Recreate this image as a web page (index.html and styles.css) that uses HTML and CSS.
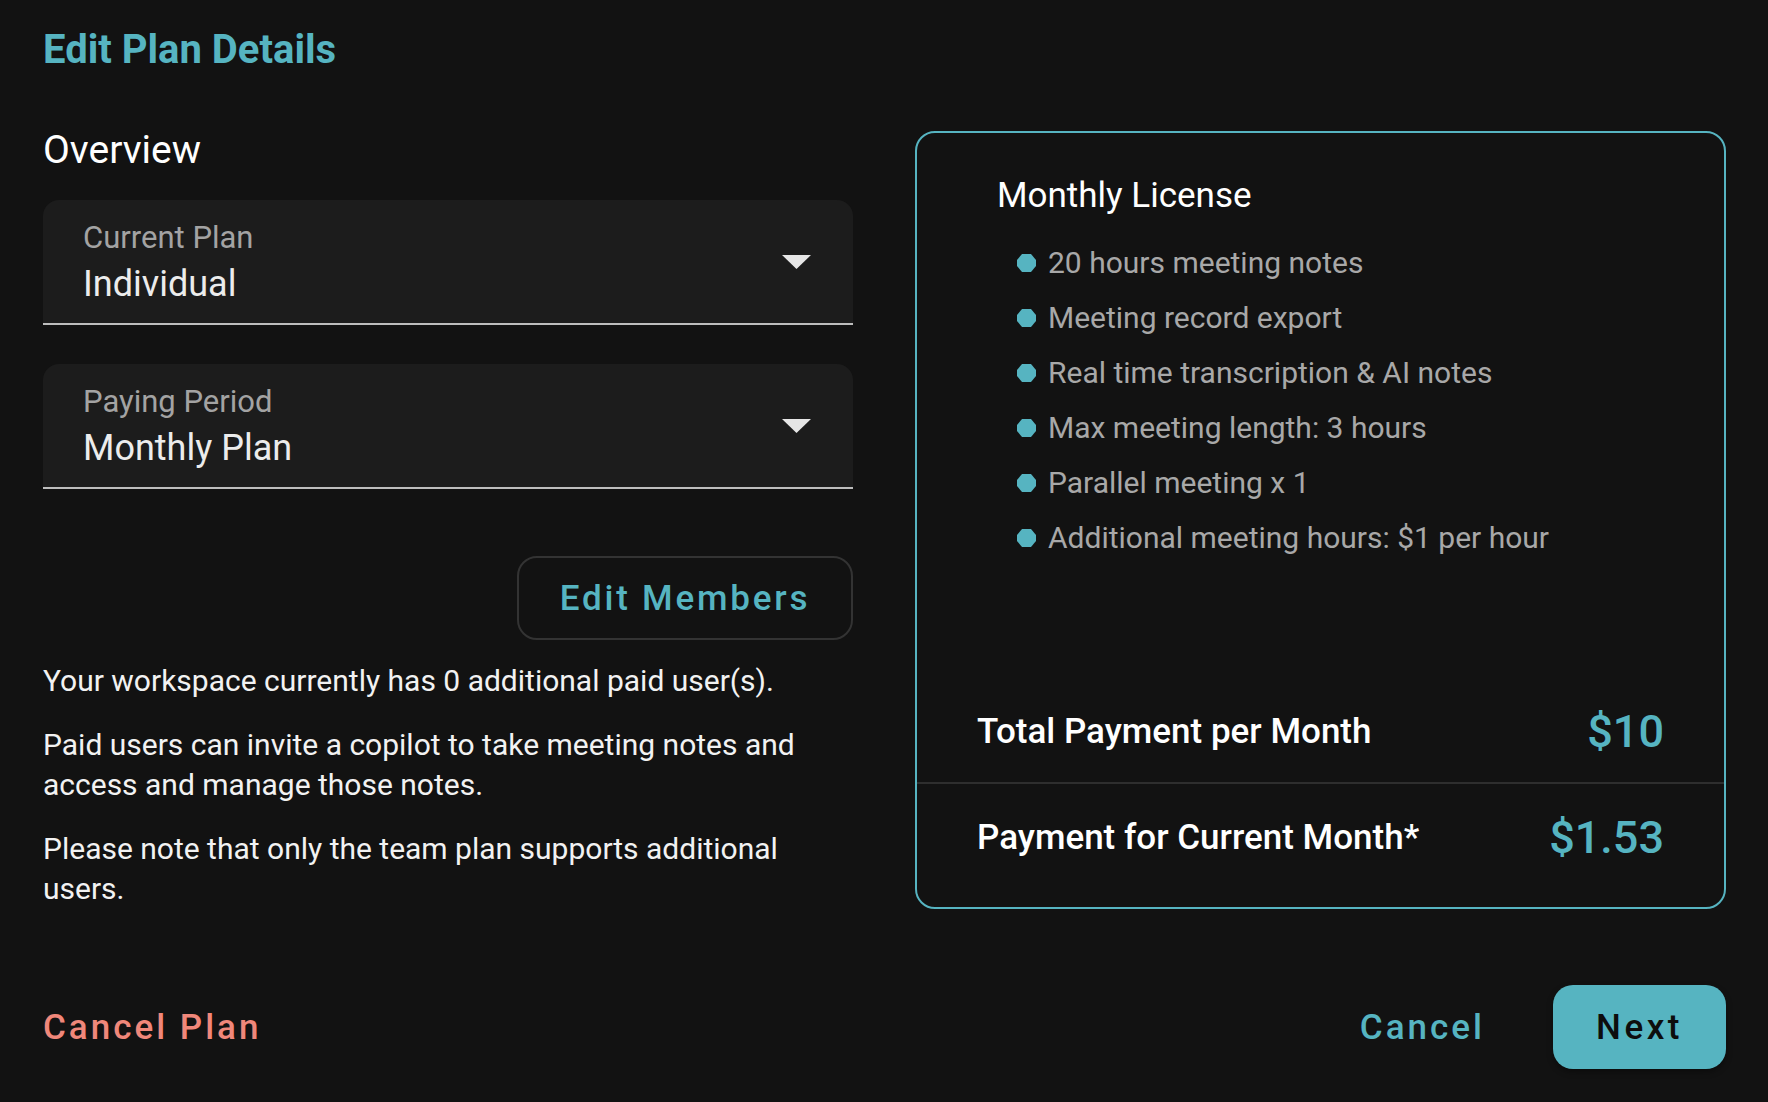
FILE: index.html
```html
<!DOCTYPE html>
<html lang="en">
<head>
<meta charset="utf-8">
<title>Edit Plan Details</title>
<link rel="stylesheet" href="styles.css">
</head>
<body>
<div class="page">
  <h1 class="title">Edit Plan Details</h1>
  <main class="main">
    <section class="left">
      <h2 class="overview">Overview</h2>
      <div class="select">
        <div class="select-text">
          <div class="select-label">Current Plan</div>
          <div class="select-value">Individual</div>
        </div>
        <svg class="caret" width="29" height="14" viewBox="0 0 29 14"><polygon points="0,0 29,0 14.5,14" fill="#e6e6e6"/></svg>
      </div>
      <div class="select select-second">
        <div class="select-text">
          <div class="select-label">Paying Period</div>
          <div class="select-value">Monthly Plan</div>
        </div>
        <svg class="caret" width="29" height="14" viewBox="0 0 29 14"><polygon points="0,0 29,0 14.5,14" fill="#e6e6e6"/></svg>
      </div>
      <div class="members-row">
        <button class="btn-outline">Edit Members</button>
      </div>
      <p class="para">Your workspace currently has 0 additional paid user(s).</p>
      <p class="para">Paid users can invite a copilot to take meeting notes and access and manage those notes.</p>
      <p class="para">Please note that only the team plan supports additional users.</p>
    </section>
    <section class="card">
      <h3 class="card-title">Monthly License</h3>
      <ul class="features">
        <li><svg class="dot" width="19" height="18" viewBox="0 0 19 18"><polygon points="5,0 14,0 19,6 19,12 14,18 5,18 0,12 0,6" fill="#56b4c1"/></svg>20 hours meeting notes</li>
        <li><svg class="dot" width="19" height="18" viewBox="0 0 19 18"><polygon points="5,0 14,0 19,6 19,12 14,18 5,18 0,12 0,6" fill="#56b4c1"/></svg>Meeting record export</li>
        <li><svg class="dot" width="19" height="18" viewBox="0 0 19 18"><polygon points="5,0 14,0 19,6 19,12 14,18 5,18 0,12 0,6" fill="#56b4c1"/></svg>Real time transcription &amp; AI notes</li>
        <li><svg class="dot" width="19" height="18" viewBox="0 0 19 18"><polygon points="5,0 14,0 19,6 19,12 14,18 5,18 0,12 0,6" fill="#56b4c1"/></svg>Max meeting length: 3 hours</li>
        <li><svg class="dot" width="19" height="18" viewBox="0 0 19 18"><polygon points="5,0 14,0 19,6 19,12 14,18 5,18 0,12 0,6" fill="#56b4c1"/></svg>Parallel meeting x 1</li>
        <li><svg class="dot" width="19" height="18" viewBox="0 0 19 18"><polygon points="5,0 14,0 19,6 19,12 14,18 5,18 0,12 0,6" fill="#56b4c1"/></svg>Additional meeting hours: $1 per hour</li>
      </ul>
      <div class="spacer"></div>
      <div class="total-row total-first">
        <span class="total-label">Total Payment per Month</span>
        <span class="total-price">$10</span>
      </div>
      <div class="total-row total-second">
        <span class="total-label">Payment for Current Month*</span>
        <span class="total-price">$1.53</span>
      </div>
    </section>
  </main>
  <footer class="footer">
    <button class="btn-text btn-danger">Cancel Plan</button>
    <div class="footer-right">
      <button class="btn-text btn-teal">Cancel</button>
      <button class="btn-primary">Next</button>
    </div>
  </footer>
</div>
</body>
</html>
```
FILE: styles.css
```css
* { box-sizing: border-box; }
html, body {
  margin: 0;
  padding: 0;
  background: #121212;
}
body {
  font-family: Roboto, "Noto Sans", "Liberation Sans", sans-serif;
  color: #f2f2f2;
}
.page {
  width: 1768px;
  height: 1102px;
  padding: 0 42px 0 43px;
  display: flex;
  flex-direction: column;
}
.title {
  margin: 0;
  padding-top: 26px;
  font-size: 40px;
  line-height: 48px;
  font-weight: 700;
  color: #56b4c1;
}
.main {
  display: flex;
  gap: 62px;
  margin-top: 52px;
}
.left {
  width: 810px;
  flex: none;
}
.overview {
  margin: 0 0 26px;
  font-size: 39px;
  line-height: 48px;
  font-weight: 400;
  color: #ffffff;
}
.select {
  height: 125px;
  background: #1c1c1c;
  border-radius: 16px 16px 0 0;
  border-bottom: 2px solid #bdbdbd;
  display: flex;
  align-items: center;
  justify-content: space-between;
  padding: 0 42px 0 40px;
}
.select-second { margin-top: 39px; }
.select-text {
  display: flex;
  flex-direction: column;
  gap: 6px;
  padding-top: 2px;
}
.select-label {
  font-size: 31px;
  line-height: 36px;
  color: #a3a3a3;
}
.select-value {
  font-size: 36px;
  line-height: 44px;
  color: #ececec;
}
.caret { display: block; }
.members-row {
  display: flex;
  justify-content: flex-end;
  margin-top: 67px;
}
.btn-outline {
  width: 336px;
  height: 84px;
  background: transparent;
  border: 2px solid #333333;
  border-radius: 20px;
  font-family: inherit;
  font-size: 35px;
  font-weight: 500;
  letter-spacing: 2.8px;
  color: #56b4c1;
  cursor: pointer;
}
.para {
  margin: 21px 0 0;
  font-size: 30px;
  line-height: 40px;
  color: #f2f2f2;
}
.para + .para { margin-top: 24px; }
.card {
  flex: none;
  width: 811px;
  height: 778px;
  margin-top: 5px;
  border: 2px solid #56b4c1;
  border-radius: 20px;
  display: flex;
  flex-direction: column;
}
.card-title {
  margin: 41px 0 0 80px;
  font-size: 35px;
  line-height: 44px;
  font-weight: 400;
  color: #ffffff;
}
.features {
  list-style: none;
  margin: 17px 0 0 100px;
  padding: 0;
}
.features li {
  display: flex;
  align-items: center;
  gap: 12px;
  height: 55px;
  font-size: 30px;
  color: #a8a8a8;
}
.dot { flex: none; display: block; }
.spacer { flex: 1; }
.total-row {
  display: flex;
  align-items: center;
  justify-content: space-between;
  padding: 0 60px 0 60px;
  height: 56px;
  box-sizing: content-box;
}
.total-first {
  padding-bottom: 23px;
  border-bottom: 2px solid #2e2e2e;
}
.total-second {
  padding-top: 25px;
  padding-bottom: 42px;
}
.total-label {
  font-size: 35px;
  font-weight: 500;
  color: #ffffff;
}
.total-price {
  font-size: 45px;
  font-weight: 500;
  color: #56b4c1;
}
.footer {
  margin-top: 76px;
  display: flex;
  align-items: center;
  justify-content: space-between;
}
.footer-right {
  display: flex;
  align-items: center;
  gap: 68px;
}
.btn-text {
  background: transparent;
  border: none;
  padding: 0;
  font-family: inherit;
  font-size: 35px;
  font-weight: 500;
  letter-spacing: 3px;
  cursor: pointer;
}
.btn-danger { color: #f0877a; }
.btn-teal { color: #56b4c1; }
.btn-primary {
  width: 173px;
  height: 84px;
  border: none;
  border-radius: 20px;
  background: #56b4c1;
  color: #0d0d0d;
  font-family: inherit;
  font-size: 35px;
  font-weight: 500;
  letter-spacing: 3.5px;
  cursor: pointer;
  box-shadow: 0 3px 6px rgba(0,0,0,0.35);
}
```
